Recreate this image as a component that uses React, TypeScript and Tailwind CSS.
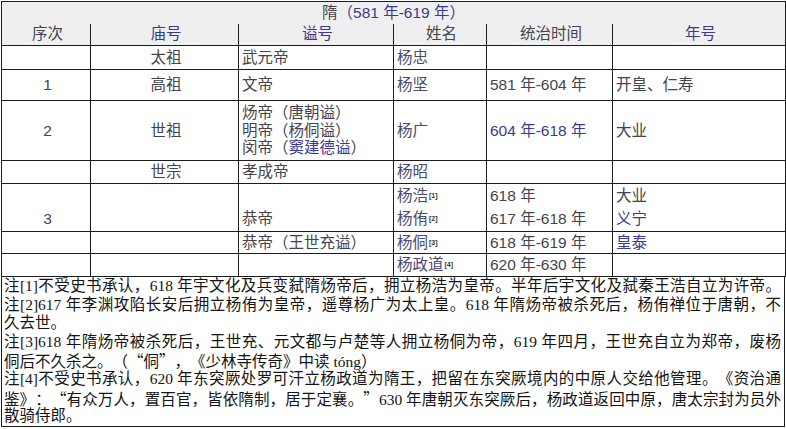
import React from "react";

const grey = "text-[#44444c]";
const blue = "text-[#3a3a92]";
const line = "border-[#1c1c1c]";

const tableFont = {
  fontFamily: '"Liberation Sans", "Noto Sans CJK SC", sans-serif',
};

function Cell({
  children,
  className = "",
  center = false,
  rowSpan,
}: {
  children?: React.ReactNode;
  className?: string;
  center?: boolean;
  rowSpan?: number;
}) {
  return (
    <td
      rowSpan={rowSpan}
      className={`p-0 pl-[3px] align-middle ${center ? "text-center pl-0" : "text-left"} ${className}`}
    >
      {children}
    </td>
  );
}

const full = `border ${line}`;
const noBottom = `border-x border-t border-b-0 ${line}`;
const noTop = `border-x border-b border-t-0 ${line}`;

function Sup({ n }: { n: number }) {
  return (
    <sup className="text-[7px] font-bold text-[#333] relative -top-[3px] ml-[1px]">
      [{n}]
    </sup>
  );
}

// full-width curly quotes, as in the original SimSun text
function withQuotes(text: string) {
  return text.split(/([“”])/).map((part, i) =>
    part === "“" || part === "”" ? (
      <span
        key={i}
        className="[font-feature-settings:'fwid']"
        style={{ fontFamily: '"Noto Sans CJK SC", sans-serif' }}
      >
        {part}
      </span>
    ) : (
      <React.Fragment key={i}>{part}</React.Fragment>
    ),
  );
}

const notes: { text: string; justify: boolean }[] = [
  {
    text: "注[1]不受史书承认，618 年宇文化及兵变弑隋炀帝后，拥立杨浩为皇帝。半年后宇文化及弑秦王浩自立为许帝。",
    justify: true,
  },
  {
    text: "注[2]617 年李渊攻陷长安后拥立杨侑为皇帝，遥尊杨广为太上皇。618 年隋炀帝被杀死后，杨侑禅位于唐朝，不",
    justify: true,
  },
  { text: "久去世。", justify: false },
  {
    text: "注[3]618 年隋炀帝被杀死后，王世充、元文都与卢楚等人拥立杨侗为帝，619 年四月，王世充自立为郑帝，废杨",
    justify: true,
  },
  { text: "侗后不久杀之。（“侗”，《少林寺传奇》中读 tóng）", justify: false },
  {
    text: "注[4]不受史书承认，620 年东突厥处罗可汗立杨政道为隋王，把留在东突厥境内的中原人交给他管理。《资治通",
    justify: true,
  },
  {
    text: "鉴》：“有众万人，置百官，皆依隋制，居于定襄。”630 年唐朝灭东突厥后，杨政道返回中原，唐太宗封为员外",
    justify: true,
  },
  { text: "散骑侍郎。", justify: false },
];

export default function App() {
  return (
    <div className="w-[786px] h-[429px] bg-white overflow-hidden pt-[1px] pl-[1px] [text-spacing-trim:space-all]">
      <table
        className={`w-[784px] table-fixed border-collapse text-[15.5px] ${grey}`}
        style={tableFont}
      >
        <colgroup>
          <col className="w-[89px]" />
          <col className="w-[148px]" />
          <col className="w-[155px]" />
          <col className="w-[93px]" />
          <col className="w-[126px]" />
          <col className="w-[173px]" />
        </colgroup>
        <tbody className="leading-[18px]">
          <tr className="h-[22px] bg-[#efefef]">
            <td colSpan={6} className={`p-0 text-center border-x border-t border-b-0 ${line}`}>
              <span className={grey}>隋</span>
              <span className={blue}>（581 年-619 年）</span>
            </td>
          </tr>
          <tr className="h-[22px] bg-[#efefef]">
            <Cell center className={noTop}>序次</Cell>
            <Cell center className={`${noTop} ${blue}`}>庙号</Cell>
            <Cell center className={`${noTop} ${blue}`}>谥号</Cell>
            <Cell center className={noTop}>姓名</Cell>
            <Cell center className={noTop}>统治时间</Cell>
            <Cell center className={`${noTop} ${blue}`}>年号</Cell>
          </tr>
          <tr className="h-[24px]">
            <Cell center className={full} />
            <Cell center className={full}>太祖</Cell>
            <Cell className={full}>武元帝</Cell>
            <Cell className={`${full} text-[#4a4a72]`}>杨忠</Cell>
            <Cell className={full} />
            <Cell className={full} />
          </tr>
          <tr className="h-[31px]">
            <Cell center className={full}>1</Cell>
            <Cell center className={full}>高祖</Cell>
            <Cell className={full}>文帝</Cell>
            <Cell className={`${full} text-[#4a4a6a]`}>杨坚</Cell>
            <Cell className={full}>581 年-604 年</Cell>
            <Cell className={full}>开皇、仁寿</Cell>
          </tr>
          <tr className="h-[60px]">
            <Cell center className={full}>2</Cell>
            <Cell center className={full}>世祖</Cell>
            <Cell className={`${full} leading-[17.5px]`}>
              <div>炀帝（唐朝谥）</div>
              <div>明帝（杨侗谥）</div>
              <div>
                闵帝（<span className={blue}>窦建德谥</span>）
              </div>
            </Cell>
            <Cell className={`${full} text-[#4a4a6a]`}>杨广</Cell>
            <Cell className={`${full} ${blue}`}>604 年-618 年</Cell>
            <Cell className={full}>大业</Cell>
          </tr>
          <tr className="h-[23px]">
            <Cell center className={full} />
            <Cell center className={full}>世宗</Cell>
            <Cell className={full}>孝成帝</Cell>
            <Cell className={`${full} text-[#4a4a72]`}>杨昭</Cell>
            <Cell className={full} />
            <Cell className={full} />
          </tr>
          <tr className="h-[24px]">
            <Cell center className={noBottom} />
            <Cell center className={noBottom} />
            <Cell className={noBottom} />
            <Cell className={`${noBottom} text-[#4a4a72]`}>
              杨浩<Sup n={1} />
            </Cell>
            <Cell className={noBottom}>618 年</Cell>
            <Cell className={noBottom}>大业</Cell>
          </tr>
          <tr className="h-[24px]">
            <Cell center className={noTop}>3</Cell>
            <Cell center className={noTop} />
            <Cell className={noTop}>恭帝</Cell>
            <Cell className={`${noTop} text-[#4a4a72]`}>
              杨侑<Sup n={2} />
            </Cell>
            <Cell className={noTop}>617 年-618 年</Cell>
            <Cell className={`${noTop} ${blue}`}>义宁</Cell>
          </tr>
          <tr className="h-[22px]">
            <Cell center className={full} />
            <Cell center className={full} />
            <Cell className={full}>恭帝（王世充谥）</Cell>
            <Cell className={`${full} text-[#4a4a72]`}>
              杨侗<Sup n={3} />
            </Cell>
            <Cell className={full}>618 年-619 年</Cell>
            <Cell className={`${full} ${blue}`}>皇泰</Cell>
          </tr>
          <tr className="h-[23px]">
            <Cell center className={full} />
            <Cell center className={full} />
            <Cell className={full} />
            <Cell className={`${full} text-[#4a4a72]`}>
              杨政道<Sup n={4} />
            </Cell>
            <Cell className={full}>620 年-630 年</Cell>
            <Cell className={full} />
          </tr>
        </tbody>
      </table>
      <div
        className={`w-[784px] border-x border-b ${line} pl-[2px] pr-[3px] text-[15.5px] text-[#141414]`}
        style={{ fontFamily: '"Liberation Serif", "Noto Sans CJK SC", serif' }}
      >
        {notes.map((n, i) => (
          <div
            key={i}
            className={`h-[18.6px] leading-[18.6px] ${
              n.justify ? "text-justify [text-align-last:justify] whitespace-nowrap" : "text-left"
            }`}
          >
            {withQuotes(n.text)}
          </div>
        ))}
      </div>
    </div>
  );
}
